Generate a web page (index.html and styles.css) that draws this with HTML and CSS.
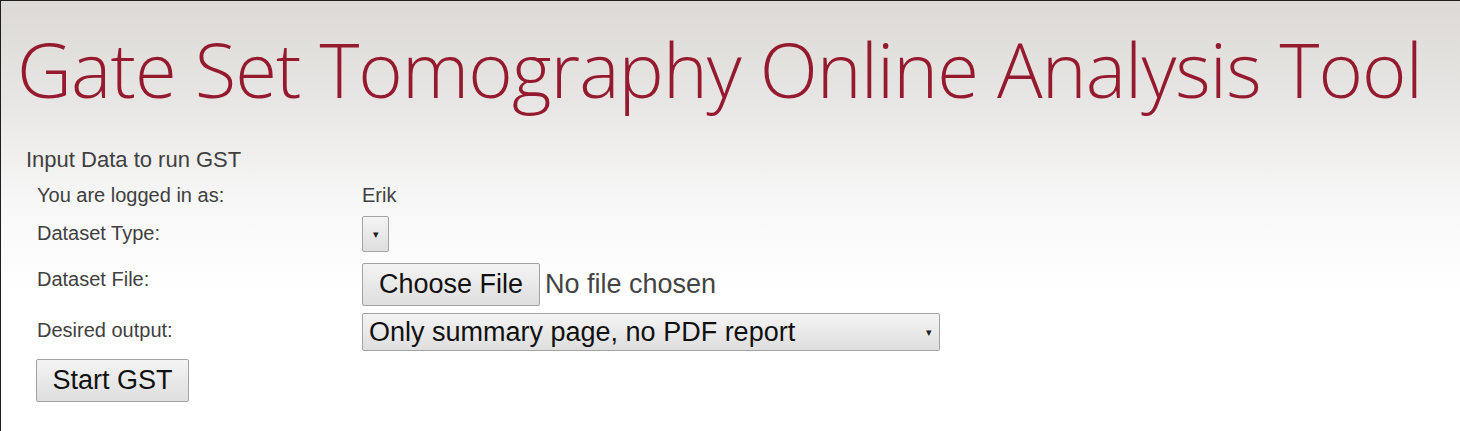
FILE: index.html
```html
<!DOCTYPE html>
<html>
<head>
<meta charset="utf-8">
<link rel="stylesheet" href="styles.css">
</head>
<body>
<div class="page">
  <h1 class="title">Gate Set Tomography Online Analysis Tool</h1>
  <div class="section">
    <div class="section-title">Input Data to run GST</div>
    <div class="form">
      <div class="row row-user">
        <div class="label">You are logged in as:</div>
        <div class="value">Erik</div>
      </div>
      <div class="row row-type">
        <div class="label">Dataset Type:</div>
        <div class="value"><button class="ctl select-empty"><span class="arrow">▾</span></button></div>
      </div>
      <div class="row row-file">
        <div class="label">Dataset File:</div>
        <div class="value"><button class="ctl file-btn">Choose File</button><span class="nofile">No file chosen</span></div>
      </div>
      <div class="row row-output">
        <div class="label">Desired output:</div>
        <div class="value"><button class="ctl select-wide"><span>Only summary page, no PDF report</span><span class="arrow">▾</span></button></div>
      </div>
    </div>
    <button class="ctl start-btn">Start GST</button>
  </div>
</div>
</body>
</html>
```
FILE: styles.css
```css
html, body {
  margin: 0;
  padding: 0;
  background: #fff;
}
.page {
  width: 1460px;
  height: 431px;
  box-sizing: border-box;
  border-top: 1px solid #1e1e1e;
  border-left: 1px solid #1e1e1e;
  background: linear-gradient(to bottom, #dcd9d6 0px, #e8e6e4 100px, #f7f7f7 200px, #ffffff 290px);
  font-family: "Liberation Sans", Arial, sans-serif;
  overflow: hidden;
}
.title {
  margin: 0;
  padding: 18px 0 0 16px;
  height: 122px;
  box-sizing: border-box;
  font-family: "Open Sans", sans-serif;
  font-weight: 300;
  font-size: 76px;
  line-height: 100px;
  color: #951a2e;
  letter-spacing: -0.9px;
  white-space: nowrap;
}
.section {
  padding: 25px 0 0 25px;
}
.section-title {
  font-size: 22px;
  color: #404040;
  line-height: 24px;
}
.form {
  display: flex;
  flex-direction: column;
  padding: 8px 0 0 11px;
}
.row {
  display: flex;
  align-items: center;
}
.label {
  width: 325px;
  font-size: 20px;
  color: #404040;
}
.value {
  display: flex;
  align-items: center;
  font-size: 20px;
  color: #404040;
}
.row-user { height: 30px; }
.row-type { height: 48px; }
.row-file { height: 52px; }
.row-output { height: 44px; }
.row-type .label { padding-bottom: 2px; }
.row-file .label { padding-bottom: 10px; }
.row-output .label { padding-bottom: 4px; }
.ctl {
  font-family: "Liberation Sans", Arial, sans-serif;
  border: 1px solid #a3a3a3;
  border-radius: 2px;
  background: linear-gradient(to bottom, #f4f4f4, #dedede);
  color: #111;
  padding: 0;
  margin: 0;
  box-sizing: border-box;
  display: flex;
  align-items: center;
}
.arrow {
  font-size: 11px;
  color: #222;
}
.select-empty {
  width: 27px;
  height: 36px;
  justify-content: center;
}
.file-btn {
  width: 178px;
  height: 43px;
  font-size: 27px;
  justify-content: center;
}
.nofile {
  font-size: 27px;
  color: #444;
  margin-left: 5px;
}
.select-wide {
  width: 578px;
  height: 38px;
  font-size: 27px;
  justify-content: space-between;
  padding: 0 7px 0 6px;
}
.start-btn {
  margin: 5px 0 0 10px;
  width: 153px;
  height: 43px;
  font-size: 27px;
  justify-content: center;
}
```
